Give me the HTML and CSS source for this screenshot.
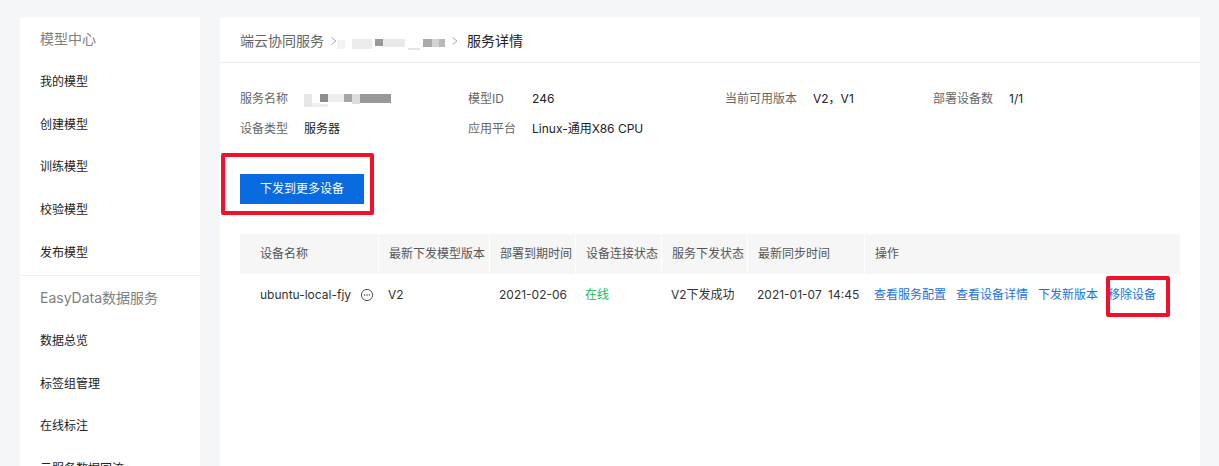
FILE: index.html
```html
<!DOCTYPE html>
<html lang="zh-CN">
<head>
<meta charset="utf-8">
<title>服务详情</title>
<link rel="stylesheet" href="styles.css">
</head>
<body>
<div class="page">
  <aside class="sidebar">
    <div class="side-title">模型中心</div>
    <a class="side-item">我的模型</a>
    <a class="side-item">创建模型</a>
    <a class="side-item">训练模型</a>
    <a class="side-item">校验模型</a>
    <a class="side-item">发布模型</a>
    <div class="side-divider"></div>
    <div class="side-title">EasyData数据服务</div>
    <a class="side-item">数据总览</a>
    <a class="side-item">标签组管理</a>
    <a class="side-item">在线标注</a>
    <a class="side-item">云服务数据回流</a>
  </aside>
  <main class="main">
    <header class="crumbs">
      <span class="crumb">端云协同服务</span>
      <svg class="chev first-chev" viewBox="0 0 8 10" width="8" height="10"><path d="M1.5 1.5 6 5 1.5 8.5" fill="none" stroke="#aaa" stroke-width="1"/></svg>
      <span class="blur blur-crumb"></span>
      <svg class="chev" viewBox="0 0 8 10" width="8" height="10"><path d="M1.5 1.5 6 5 1.5 8.5" fill="none" stroke="#aaa" stroke-width="1"/></svg>
      <span class="crumb-current">服务详情</span>
    </header>
    <section class="content">
      <div class="info">
        <div class="field"><span class="label">服务名称</span><span class="blur blur-name"></span></div>
        <div class="field"><span class="label">模型ID</span><span class="value">246</span></div>
        <div class="field"><span class="label">当前可用版本</span><span class="value">V2，V1</span></div>
        <div class="field"><span class="label">部署设备数</span><span class="value">1/1</span></div>
        <div class="field"><span class="label">设备类型</span><span class="value">服务器</span></div>
        <div class="field"><span class="label">应用平台</span><span class="value">Linux-通用X86 CPU</span></div>
      </div>
      <div class="action-wrap">
        <button class="primary" type="button">下发到更多设备</button>
        <span class="mark mark-button"></span>
      </div>
      <div class="table">
        <div class="th first">设备名称</div>
        <div class="th">最新下发模型版本</div>
        <div class="th">部署到期时间</div>
        <div class="th">设备连接状态</div>
        <div class="th">服务下发状态</div>
        <div class="th">最新同步时间</div>
        <div class="th">操作</div>
        <div class="td first">ubuntu-local-fjy
          <svg class="more" viewBox="0 0 14 14" width="14" height="14"><circle cx="7" cy="7" r="5.6" fill="none" stroke="#555" stroke-width="1"/><circle cx="4.6" cy="7" r=".8" fill="#555"/><circle cx="7" cy="7" r=".8" fill="#555"/><circle cx="9.4" cy="7" r=".8" fill="#555"/></svg>
        </div>
        <div class="td">V2</div>
        <div class="td">2021-02-06</div>
        <div class="td online">在线</div>
        <div class="td">V2下发成功</div>
        <div class="td sync">2021-01-07 14:45</div>
        <div class="td ops">
          <a class="link">查看服务配置</a>
          <a class="link">查看设备详情</a>
          <a class="link">下发新版本</a>
          <a class="link">移除设备</a>
          <span class="mark mark-remove"></span>
        </div>
      </div>
    </section>
  </main>
</div>
</body>
</html>
```

FILE: styles.css
```css
* { box-sizing: border-box; }
html, body { margin: 0; height: 466px; overflow: hidden; }
body {
  background: #f5f6f8;
  color: #333;
  font: 12px/20px Inter, "Noto Sans CJK SC", "Noto Sans", sans-serif;
}
.page {
  display: flex;
  gap: 20px;
  height: 466px;
  padding: 17px 19px 0 20px;
  overflow: hidden;
}
.sidebar {
  flex: 0 0 180px;
  background: #fff;
  overflow: hidden;
}
.side-title, .side-item {
  display: flex;
  align-items: center;
  height: 42.67px;
  padding: 2px 0 0 20px;
}
.side-title { color: #808080; font-size: 14px; }
.side-item { color: #222; }
.side-divider { height: 1px; margin-top: 2px; background: #eee; }
.main { flex: 1; background: #fff; min-width: 0; }
.crumbs {
  display: flex;
  align-items: center;
  height: 46px;
  padding: 2px 0 0 20px;
  border-bottom: 1px solid #eee;
  font-size: 14px;
}
.crumb { color: #666; }
.chev { margin: 0 4px 0 5px; }
.first-chev { margin-left: 6px; }
.crumb-current { color: #222; margin-left: 4px; }
.blur { display: block; background-repeat: no-repeat; filter: blur(0.6px); }
.blur-crumb {
  width: 109px;
  height: 11px;
  margin: 8px 0 0 -5px;
  background-image:
    linear-gradient(#f2f2f2, #f2f2f2),
    linear-gradient(#ececec, #ececec),
    linear-gradient(#999, #999),
    linear-gradient(#e9e9e9, #e9e9e9),
    linear-gradient(#e4e4e4, #e4e4e4),
    linear-gradient(#aaa, #aaa),
    linear-gradient(#d2d2d2, #d2d2d2),
    linear-gradient(#b8b8b8, #b8b8b8);
  background-size: 8px 9px, 20px 10px, 8px 7px, 22px 8px, 12px 2px, 9px 8px, 7px 8px, 7px 8px;
  background-position: 0 1px, 15px 0, 38px 0, 46px 0, 71px 9px, 86px 0, 95px 0, 101px 0;
}
.content { padding: 20px 20px 0; }
.info {
  display: grid;
  grid-template-columns: 228px 257px 208px 1fr;
  grid-auto-rows: 30px;
}
.field { display: flex; align-items: center; gap: 16px; padding-top: 2px; }
.label { color: #666; min-width: 48px; }
.value { color: #222; }
.blur-name {
  width: 87px;
  height: 13px;
  margin-top: 3px;
  background-image:
    linear-gradient(#e6e6e6, #e6e6e6),
    linear-gradient(#eee, #eee),
    linear-gradient(#8c8c8c, #8c8c8c),
    linear-gradient(#eee, #eee),
    linear-gradient(#a6a6a6, #a6a6a6),
    linear-gradient(#dcdcdc, #dcdcdc),
    linear-gradient(#989898, #989898),
    linear-gradient(#ededed, #ededed);
  background-size: 8px 13px, 8px 4px, 8px 8px, 16px 8px, 8px 8px, 8px 10px, 31px 9px, 16px 3px;
  background-position: 0 0, 8px 9px, 16px 0, 24px 0, 40px 0, 48px 0, 56px 0, 8px 10px;
}
.action-wrap { position: relative; margin-top: 31px; height: 30px; }
.primary {
  display: block;
  width: 124px;
  height: 30px;
  padding: 0;
  border: 0;
  border-radius: 0;
  background: #0a6be0;
  color: #fff;
  font: inherit;
}
.mark {
  position: absolute;
  border: 4px solid #f5102a;
  border-radius: 2px;
  pointer-events: none;
}
.mark-button { left: -19px; top: -21px; width: 153px; height: 62px; }
.table {
  display: grid;
  grid-template-columns: 138px 110px 85px 85px 85px 116px 315px;
  grid-template-rows: 40px 40px;
  column-gap: 1px;
  margin-top: 30px;
}
.th, .td { display: flex; align-items: center; white-space: nowrap; }
.th { background: #f6f6f6; color: #555; padding-left: 10px; }
.td { color: #333; padding: 2px 0 0 9px; }
.th.first { padding-left: 20px; }
.td.first { padding-left: 20px; }
.more { margin-left: 9px; flex: none; }
.sync { word-spacing: 3px; }
.online { color: #10bb5c; }
.ops { position: relative; gap: 10px; }
.link { color: #1a72de; }
.mark-remove { left: 241px; top: 2px; width: 64px; height: 41px; }
```
